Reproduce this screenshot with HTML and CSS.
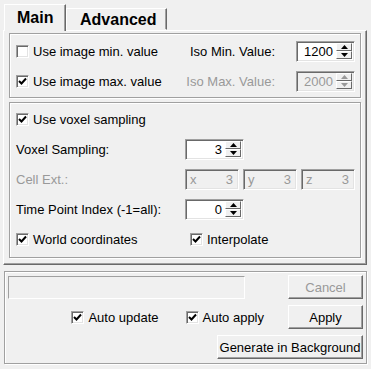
FILE: index.html
```html
<!DOCTYPE html>
<html lang="en">
<head>
    <meta charset="UTF-8">
    <link rel="stylesheet" href="styles.css">
    <title>Iso Surface</title>
</head>
<body>
    <div class="dialog">
        <div class="tabbar">
            <div class="tab tab-active">Main</div>
            <div class="tab">Advanced</div>
        </div>
        <div class="pane">
            <div class="group group-iso">
                <div class="iso-row">
                    <label class="check"><span class="box"></span>Use image min. value</label>
                    <span class="iso-label">Iso Min. Value:</span>
                    <div class="spin">
                        <span class="spin-value">1200</span>
                        <span class="spin-btns">
                            <span class="spin-btn"><svg width="7" height="4" viewBox="0 0 7 4"><polygon points="3.5,0 7,4 0,4"/></svg></span>
                            <span class="spin-btn"><svg width="7" height="4" viewBox="0 0 7 4"><polygon points="0,0 7,0 3.5,4"/></svg></span>
                        </span>
                    </div>
                </div>
                <div class="iso-row">
                    <label class="check"><span class="box"><svg width="9" height="9" viewBox="0 0 9 9"><path d="M1 4 L3.5 6.5 L8 1.5" fill="none" stroke="#000" stroke-width="2"/></svg></span>Use image max. value</label>
                    <span class="iso-label disabled">Iso Max. Value:</span>
                    <div class="spin spin-disabled">
                        <span class="spin-value">2000</span>
                        <span class="spin-btns">
                            <span class="spin-btn"><svg width="7" height="4" viewBox="0 0 7 4"><polygon points="3.5,0 7,4 0,4"/></svg></span>
                            <span class="spin-btn"><svg width="7" height="4" viewBox="0 0 7 4"><polygon points="0,0 7,0 3.5,4"/></svg></span>
                        </span>
                    </div>
                </div>
            </div>

            <div class="group group-voxel">
                <label class="check wide"><span class="box"><svg width="9" height="9" viewBox="0 0 9 9"><path d="M1 4 L3.5 6.5 L8 1.5" fill="none" stroke="#000" stroke-width="2"/></svg></span>Use voxel sampling</label>

                <span class="label">Voxel Sampling:</span>
                <div class="spin">
                    <span class="spin-value">3</span>
                    <span class="spin-btns">
                        <span class="spin-btn"><svg width="7" height="4" viewBox="0 0 7 4"><polygon points="3.5,0 7,4 0,4"/></svg></span>
                        <span class="spin-btn"><svg width="7" height="4" viewBox="0 0 7 4"><polygon points="0,0 7,0 3.5,4"/></svg></span>
                    </span>
                </div>

                <span class="label disabled">Cell Ext.:</span>
                <div class="cells">
                    <div class="cell"><span>x</span><span>3</span></div>
                    <div class="cell"><span>y</span><span>3</span></div>
                    <div class="cell"><span>z</span><span>3</span></div>
                </div>

                <span class="label">Time Point Index (-1=all):</span>
                <div class="spin">
                    <span class="spin-value">0</span>
                    <span class="spin-btns">
                        <span class="spin-btn"><svg width="7" height="4" viewBox="0 0 7 4"><polygon points="3.5,0 7,4 0,4"/></svg></span>
                        <span class="spin-btn"><svg width="7" height="4" viewBox="0 0 7 4"><polygon points="0,0 7,0 3.5,4"/></svg></span>
                    </span>
                </div>

                <label class="check"><span class="box"><svg width="9" height="9" viewBox="0 0 9 9"><path d="M1 4 L3.5 6.5 L8 1.5" fill="none" stroke="#000" stroke-width="2"/></svg></span>World coordinates</label>
                <label class="check interp"><span class="box"><svg width="9" height="9" viewBox="0 0 9 9"><path d="M1 4 L3.5 6.5 L8 1.5" fill="none" stroke="#000" stroke-width="2"/></svg></span>Interpolate</label>
            </div>
        </div>

        <div class="frame">
            <div class="frame-row">
                <div class="progress"></div>
                <button class="btn" disabled>Cancel</button>
            </div>
            <div class="frame-row">
                <label class="check auto-update"><span class="box"><svg width="9" height="9" viewBox="0 0 9 9"><path d="M1 4 L3.5 6.5 L8 1.5" fill="none" stroke="#000" stroke-width="2"/></svg></span>Auto update</label>
                <label class="check"><span class="box"><svg width="9" height="9" viewBox="0 0 9 9"><path d="M1 4 L3.5 6.5 L8 1.5" fill="none" stroke="#000" stroke-width="2"/></svg></span>Auto apply</label>
                <button class="btn">Apply</button>
            </div>
            <div class="frame-row">
                <button class="btn btn-wide">Generate in Background</button>
            </div>
        </div>
    </div>
</body>
</html>
```

FILE: styles.css
```css
body {
    margin: 0;
    width: 371px;
    height: 369px;
    overflow: hidden;
    background: #f0f0f0;
    font: 13px "Liberation Sans", Arial, sans-serif;
    color: #000;
}

.dialog {
    padding-left: 3px;
    width: 364px;
}

.disabled {
    color: #999;
}

/* tabs */
.tabbar {
    display: flex;
    align-items: flex-end;
    height: 30px;
    padding-left: 1px;
}

.tab {
    box-sizing: border-box;
    height: 22px;
    padding: 0 10px 0 13px;
    line-height: 21px;
    font-size: 16px;
    font-weight: bold;
    border: 1px solid;
    border-color: #fff #696969 transparent #fff;
    box-shadow: inset -1px 0 #a0a0a0;
}

.tab-active {
    position: relative;
    z-index: 1;
    width: 62px;
    height: 27px;
    margin-bottom: -1px;
    padding: 0 0 0 12px;
    line-height: 25px;
    background: #f0f0f0;
    border-bottom: none;
}

.pane {
    box-sizing: border-box;
    height: 235px;
    padding: 2px 5px 0 5px;
    border: 1px solid;
    border-color: #fff #696969 #696969 #fff;
    box-shadow: inset -1px -1px #a0a0a0;
    display: flex;
    flex-direction: column;
    gap: 4px;
}

/* group boxes */
.group {
    border: 1px solid #a0a0a0;
    box-shadow: inset 1px 1px #fff, 1px 1px 0 #fff;
}

.group-iso {
    padding: 7px 5px 5px 6px;
    display: flex;
    flex-direction: column;
    gap: 9px;
}

.iso-row {
    display: flex;
    align-items: center;
    height: 21px;
}

.iso-row .check {
    flex: 1;
}

.iso-label {
    margin-right: 21px;
}

.group-voxel {
    padding: 6px 5px 7px 6px;
    display: grid;
    grid-template-columns: 169px 1fr;
    grid-auto-rows: 21px;
    row-gap: 9px;
    align-items: center;
}

.wide {
    grid-column: 1 / 3;
}

.interp {
    padding-left: 5px;
}

/* checkbox */
.check {
    display: flex;
    align-items: center;
    white-space: nowrap;
}

.box {
    box-sizing: border-box;
    width: 13px;
    height: 13px;
    margin-right: 4px;
    border: 1px solid;
    border-color: #a0a0a0 #fff #fff #a0a0a0;
    box-shadow: inset 1px 1px #696969, inset -1px -1px #e3e3e3;
    background: #fff;
    display: flex;
    align-items: center;
    justify-content: center;
}

/* spin box */
.spin {
    box-sizing: border-box;
    display: flex;
    width: 59px;
    height: 21px;
    padding: 1px 2px 2px 2px;
    border: 1px solid;
    border-color: #a0a0a0 #fff #fff #a0a0a0;
    box-shadow: inset 1px 1px #696969, inset -1px -1px #e3e3e3;
    background: #fff;
}

.spin-value {
    flex: 1;
    text-align: right;
    padding-right: 3px;
    line-height: 17px;
}

.spin-btns {
    display: flex;
    flex-direction: column;
    width: 16px;
}

.spin-btn {
    flex: 1;
    box-sizing: border-box;
    display: flex;
    align-items: center;
    justify-content: center;
    background: #f0f0f0;
    border: 1px solid;
    border-color: #fff #696969 #696969 #fff;
}

.spin-disabled {
    background: #f0f0f0;
    color: #999;
}

.spin-disabled svg {
    fill: #999;
}

/* cell extent */
.cells {
    display: flex;
    gap: 4px;
}

.cell {
    box-sizing: border-box;
    width: 54px;
    height: 21px;
    display: flex;
    justify-content: space-between;
    align-items: center;
    padding: 0 5px 0 4px;
    color: #999;
    border: 1px solid;
    border-color: #a0a0a0 #fff #fff #a0a0a0;
    box-shadow: inset 1px 1px #696969, inset -1px -1px #e3e3e3;
}

/* bottom frame */
.frame {
    box-sizing: border-box;
    margin: 6px 0 0 1px;
    width: 363px;
    height: 93px;
    padding: 3px 3px 3px 3px;
    border: 1px solid #a0a0a0;
    box-shadow: inset 1px 1px #fff, 1px 1px 0 #fff;
    display: flex;
    flex-direction: column;
    gap: 6px;
}

.frame-row {
    display: flex;
    align-items: center;
    justify-content: flex-end;
    height: 24px;
}

.frame-row:first-child {
    justify-content: space-between;
}

.progress {
    box-sizing: border-box;
    width: 237px;
    height: 23px;
    border: 1px solid;
    border-color: #a0a0a0 #fff #fff #a0a0a0;
}

.auto-update {
    margin-right: 27px;
}

.btn {
    box-sizing: border-box;
    width: 75px;
    height: 24px;
    margin-left: 24px;
    padding: 0;
    font: inherit;
    color: #000;
    background: #f0f0f0;
    border: 1px solid;
    border-color: #fff #696969 #696969 #fff;
    box-shadow: inset -1px -1px #a0a0a0;
}

.btn:disabled {
    color: #999;
}

.btn-wide {
    width: 146px;
}
```
